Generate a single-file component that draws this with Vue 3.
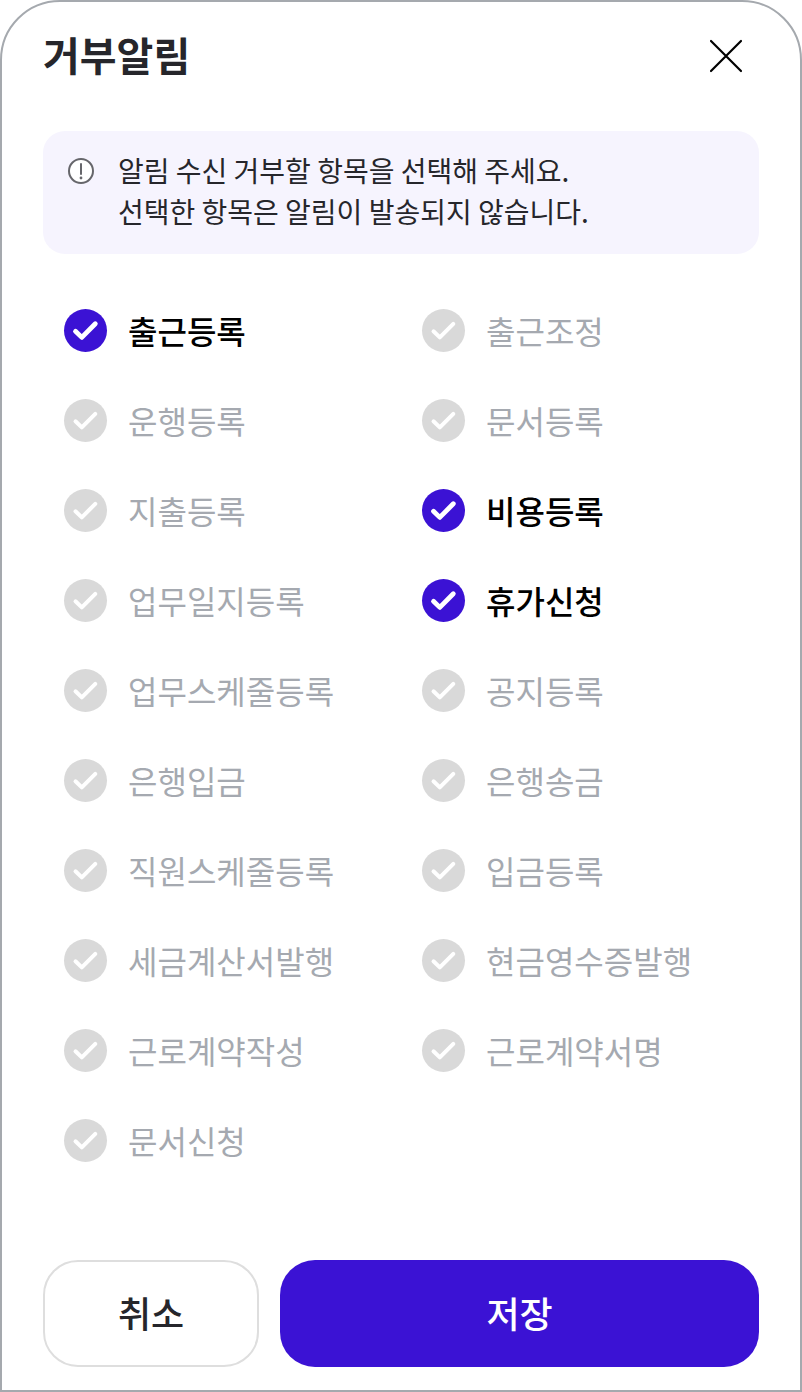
<script setup>
import { ref } from 'vue'

const items = ref([
  { id: 'attendance', label: '출근등록', checked: true },
  { id: 'attendance-adjust', label: '출근조정', checked: false },
  { id: 'driving', label: '운행등록', checked: false },
  { id: 'document', label: '문서등록', checked: false },
  { id: 'spending', label: '지출등록', checked: false },
  { id: 'expense', label: '비용등록', checked: true },
  { id: 'work-log', label: '업무일지등록', checked: false },
  { id: 'vacation', label: '휴가신청', checked: true },
  { id: 'work-schedule', label: '업무스케줄등록', checked: false },
  { id: 'notice', label: '공지등록', checked: false },
  { id: 'bank-deposit', label: '은행입금', checked: false },
  { id: 'bank-transfer', label: '은행송금', checked: false },
  { id: 'staff-schedule', label: '직원스케줄등록', checked: false },
  { id: 'deposit', label: '입금등록', checked: false },
  { id: 'tax-invoice', label: '세금계산서발행', checked: false },
  { id: 'cash-receipt', label: '현금영수증발행', checked: false },
  { id: 'contract-write', label: '근로계약작성', checked: false },
  { id: 'contract-sign', label: '근로계약서명', checked: false },
  { id: 'document-request', label: '문서신청', checked: false }
])
</script>

<template>
  <main class="sheet">
    <header class="header">
      <h1 class="title">거부알림</h1>
      <button type="button" class="close" aria-label="닫기">
        <svg viewBox="0 0 34 34" width="34" height="34" aria-hidden="true">
          <path d="M2 2 32 32M32 2 2 32" fill="none" stroke="#000" stroke-width="2.2" stroke-linecap="round" />
        </svg>
      </button>
    </header>

    <section class="notice">
      <svg class="notice-icon" viewBox="0 0 26 26" width="26" height="26" aria-hidden="true">
        <circle cx="13" cy="13" r="12" fill="#fff" stroke="#66666b" stroke-width="2" />
        <path d="M13 6V16" fill="none" stroke="#66666b" stroke-width="2" stroke-linecap="round" />
        <circle cx="13" cy="20" r="1.4" fill="#66666b" />
      </svg>
      <p class="notice-text">알림 수신 거부할 항목을 선택해 주세요.<br />선택한 항목은 알림이 발송되지 않습니다.</p>
    </section>

    <form class="form" @submit.prevent>
      <div class="options">
        <div v-for="item in items" :key="item.id" class="option">
          <span class="box">
            <input :id="item.id" v-model="item.checked" type="checkbox" class="check" />
            <svg class="tick" viewBox="0 0 43 43" width="43" height="43" aria-hidden="true">
              <path d="M11.5 22.3 17.8 28.4 31.3 14.8" fill="none" stroke="#fff" stroke-linecap="round" stroke-linejoin="round" />
            </svg>
          </span>
          <label :for="item.id" class="label" :class="{ on: item.checked }">{{ item.label }}</label>
        </div>
      </div>

      <footer class="actions">
        <button type="button" class="btn cancel">취소</button>
        <button type="submit" class="btn save">저장</button>
      </footer>
    </form>
  </main>
</template>

<style>
body {
  background: #fff;
}
</style>

<style scoped>
.sheet {
  box-sizing: border-box;
  display: flex;
  flex-direction: column;
  min-height: 100vh;
  padding: 24px 41px 23px;
  border: 2px solid #a5a9ae;
  border-radius: 60px 60px 0 0;
  background: #fff;
  color: #26262b;
  font-family: "Noto Sans CJK KR", sans-serif;
}

.header {
  display: flex;
  align-items: center;
  justify-content: space-between;
  height: 60px;
  padding-right: 16px;
}

.title {
  margin: 0;
  padding-bottom: 4px;
  font-size: 40px;
  font-weight: 700;
  line-height: 56px;
}

.close {
  display: flex;
  padding: 0;
  border: 0;
  background: none;
  cursor: pointer;
}

.notice {
  display: flex;
  align-items: flex-start;
  gap: 24px;
  margin-top: 45px;
  padding: 19px 25px 22px;
  border-radius: 22px;
  background: #f6f4fe;
}

.notice-icon {
  flex: none;
  margin-top: 8px;
}

.notice-text {
  margin: 0;
  font-size: 28px;
  font-weight: 400;
  line-height: 41px;
}

.form {
  display: flex;
  flex: 1;
  flex-direction: column;
}

.options {
  display: grid;
  grid-template-columns: 1fr 1fr;
  row-gap: 47px;
  margin-top: 55px;
  padding-bottom: 97px;
}

.option {
  display: flex;
  align-items: center;
  gap: 21px;
  height: 43px;
  padding-left: 21px;
}

.box {
  display: grid;
  flex: none;
}

.check {
  grid-area: 1 / 1;
  width: 43px;
  height: 43px;
  margin: 0;
  border-radius: 50%;
  appearance: none;
  background: #d9d9d9;
  cursor: pointer;
}

.check:checked {
  background: #3b12d4;
}

.tick {
  grid-area: 1 / 1;
  pointer-events: none;
  stroke-width: 4;
}

.check:checked + .tick {
  stroke-width: 4.8;
}

.label {
  color: #a5a9b0;
  font-size: 32px;
  font-weight: 400;
  line-height: 43px;
  white-space: nowrap;
  cursor: pointer;
}

.label.on {
  color: #000;
  font-weight: 500;
}

.actions {
  display: grid;
  grid-template-columns: 216fr 479fr;
  gap: 21px;
  margin-top: auto;
}

.btn {
  height: 107px;
  padding: 0 0 4px;
  border: 0;
  border-radius: 35px;
  font-family: inherit;
  font-size: 36px;
  font-weight: 500;
  cursor: pointer;
}

.cancel {
  border: 2px solid #dedede;
  background: #fff;
  color: #26262b;
}

.save {
  background: #3b12d4;
  color: #fff;
}
</style>
